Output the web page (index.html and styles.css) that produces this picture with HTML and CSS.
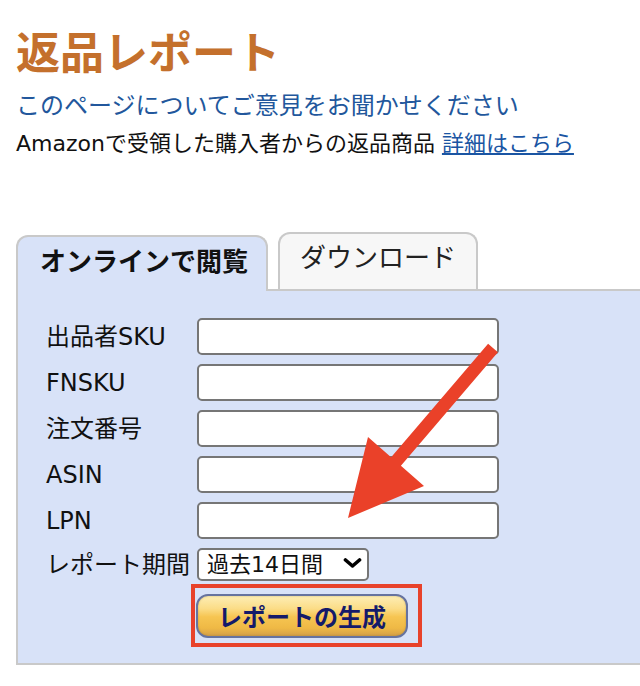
FILE: index.html
```html
<!DOCTYPE html>
<html lang="ja">
<head>
  <meta charset="UTF-8">
  <meta name="viewport" content="width=device-width, initial-scale=1">
  <title>返品レポート</title>
  <link rel="stylesheet" href="styles.css">
</head>
<body>
  <div class="page">
    <h1>返品レポート</h1>
    <p class="feedback">このページについてご意見をお聞かせください</p>
    <p class="desc">Amazonで受領した購入者からの返品商品 <a href="#">詳細はこちら</a></p>

    <div class="tabs">
      <div class="tab active">オンラインで閲覧</div>
      <div class="tab plain">ダウンロード</div>
    </div>

    <div class="panel">
      <form class="form">
        <label for="sku">出品者SKU</label>
        <input type="text" id="sku">

        <label for="fnsku">FNSKU</label>
        <input type="text" id="fnsku">

        <label for="order">注文番号</label>
        <input type="text" id="order">

        <label for="asin">ASIN</label>
        <input type="text" id="asin">

        <label for="lpn">LPN</label>
        <input type="text" id="lpn">

        <label for="period">レポート期間</label>
        <span class="select-wrap">
          <select id="period">
            <option>過去14日間</option>
            <option>過去30日間</option>
            <option>過去60日間</option>
          </select>
          <svg class="chevron" viewBox="0 0 19 10">
            <path d="M2.5 2 L9.5 8 L16.5 2" fill="none" stroke="#000" stroke-width="3.6" stroke-linecap="round" stroke-linejoin="round"/>
          </svg>
        </span>

        <div class="submit-row">
          <button type="button" class="generate">レポートの生成</button>
        </div>
      </form>
    </div>

    <!-- 注釈の矢印 -->
    <svg class="arrow" width="640" height="686" viewBox="0 0 640 686">
      <polygon points="488.1,343.8 497.9,352.2 400.9,465.7 424,486 348,518 368,437 391.1,457.3" fill="#ea4129"/>
    </svg>
  </div>
</body>
</html>
```

FILE: styles.css
```css
body {
  margin: 0;
  font-family: "DejaVu Sans", "Noto Sans CJK JP", sans-serif;
  color: #111;
  background: #fff;
}
.page {
  position: relative;
  box-sizing: border-box;
  height: 686px;
  padding: 29px 0 0 16px;
  overflow: hidden;
}
h1 {
  margin: 0;
  font-size: 44px;
  line-height: 50px;
  color: #c4702c;
}
.feedback {
  margin: 10px 0 0;
  font-size: 24px;
  line-height: 34px;
  color: #22579c;
}
.desc {
  margin: 4px 0 0;
  font-size: 22px;
  line-height: 34px;
}
.desc a {
  color: #1a55a3;
}
.tabs {
  display: flex;
  align-items: flex-end;
  margin-top: 71px;
}
.tab {
  box-sizing: border-box;
  border: 2px solid #c9c9c9;
  border-bottom: none;
  border-radius: 12px 12px 0 0;
  font-size: 26px;
  line-height: 30px;
}
.tab.active {
  position: relative;
  z-index: 1;
  width: 252px;
  padding: 10px 0 14px 22px;
  margin-bottom: -2px;
  background: #d8e2f8;
  font-weight: bold;
}
.tab.plain {
  width: 200px;
  margin-left: 10px;
  padding: 9px 0 16px;
  text-align: center;
  background: #f7f7f7;
  color: #222;
}
.panel {
  background: #d8e2f8;
  border: 2px solid #c9c9c9;
  border-right: none;
  padding: 27px 0 16px 28px;
}
.form {
  display: grid;
  grid-template-columns: 151px auto;
  justify-content: start;
  align-items: center;
  row-gap: 9px;
}
.form label {
  font-size: 24px;
  line-height: 30px;
}
.form input {
  box-sizing: border-box;
  width: 302px;
  height: 37px;
  margin: 0;
  padding: 0 6px;
  border: 2px solid #767676;
  border-radius: 5px;
  background: #fff;
  font: inherit;
  font-size: 20px;
}
.select-wrap {
  position: relative;
  display: block;
  width: 172px;
  height: 33px;
}
.select-wrap select {
  appearance: none;
  -webkit-appearance: none;
  box-sizing: border-box;
  width: 172px;
  height: 33px;
  margin: 0;
  padding: 0 0 0 8px;
  border: 2px solid #767676;
  border-radius: 5px;
  background: #fff;
  color: #111;
  font-family: inherit;
  font-size: 22px;
}
.chevron {
  position: absolute;
  right: 7px;
  top: 10px;
  width: 19px;
  height: 10px;
  pointer-events: none;
}
.submit-row {
  grid-column: 2;
  justify-self: start;
  margin: -6px 0 0 -6px;
  padding: 6px 10px 5px 1px;
  border: 4px solid #e8422b;
}
.generate {
  display: block;
  box-sizing: border-box;
  width: 212px;
  height: 44px;
  padding: 3px 0 0;
  border: 2px solid #66739f;
  border-radius: 12px;
  background: linear-gradient(to bottom, #fdeeb5 0%, #fbdc86 32%, #f6c552 52%, #efb945 80%, #d39f48 100%);
  box-shadow: inset 0 0 2px rgba(120, 90, 20, 0.4);
  color: #141a6a;
  font-family: "DejaVu Sans", "Noto Sans CJK JP", sans-serif;
  font-size: 24px;
  font-weight: bold;
  line-height: 36px;
}
.arrow {
  position: absolute;
  left: 0;
  top: 0;
  pointer-events: none;
}
```
